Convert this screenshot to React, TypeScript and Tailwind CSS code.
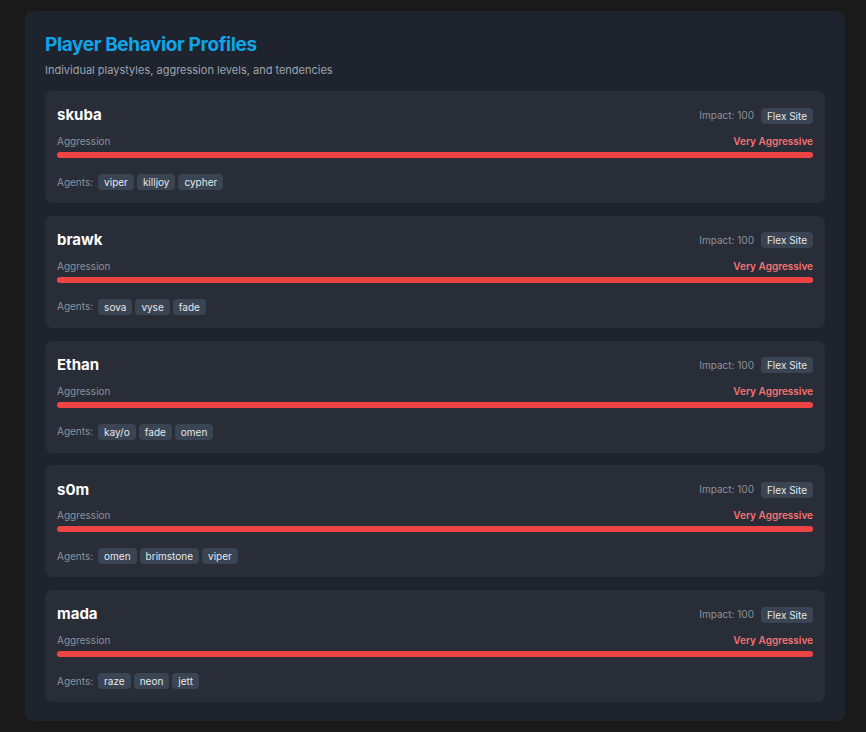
import React from "react";

const players = [
  { name: "skuba", agents: ["viper", "killjoy", "cypher"] },
  { name: "brawk", agents: ["sova", "vyse", "fade"] },
  { name: "Ethan", agents: ["kay/o", "fade", "omen"] },
  { name: "s0m", agents: ["omen", "brimstone", "viper"] },
  { name: "mada", agents: ["raze", "neon", "jett"] },
];

function Card({ name, agents }: { name: string; agents: string[] }) {
  return (
    <div className="rounded-lg bg-[#282d38] px-3 pt-3 pb-[13px]">
      <div className="flex h-6 items-center justify-between pt-px">
        <div className="text-[15px] font-bold text-white">{name}</div>
        <div className="flex items-center gap-[7px]">
          <span className="text-[10px] text-[#8b929c]">Impact: 100</span>
          <span className="rounded bg-[#3b4452] px-1.5 py-px text-[10px] leading-[14px] text-[#e5e7eb]">
            Flex Site
          </span>
        </div>
      </div>
      <div className="mt-[7px] flex items-center justify-between text-[10px] leading-[15px]">
        <span className="text-[#8b929c]">Aggression</span>
        <span className="font-semibold text-[#f87171]">Very Aggressive</span>
      </div>
      <div className="mt-[3px] h-1.5 w-full rounded-full bg-[#374151]">
        <div className="h-full w-full rounded-full bg-[#ef4444]" />
      </div>
      <div className="mt-4 flex items-center">
        <span className="mr-[5px] text-[10px] text-[#8b929c]">Agents:</span>
        <div className="flex gap-[3px]">
          {agents.map((a) => (
            <span
              key={a}
              className="rounded bg-[#3b4452] px-1.5 py-px text-[10px] leading-[14px] text-[#e5e7eb]"
            >
              {a}
            </span>
          ))}
        </div>
      </div>
    </div>
  );
}

export default function App() {
  return (
    <div
      className="min-h-[732px] bg-[#1a1a1a] pl-[25px] pt-[11px] pb-[11px]"
      style={{ fontFamily: "Inter, 'Noto Sans', sans-serif" }}
    >
      <div className="w-[820px] rounded-lg bg-[#1f232d] px-5 pt-5 pb-[19px]">
        <h1 className="text-[19px] font-bold leading-7 tracking-[-0.02em] text-[#0ea5e9]">
          Player Behavior Profiles
        </h1>
        <p className="mt-[3px] text-[11px] leading-4 text-[#9ca3af]">
          Individual playstyles, aggression levels, and tendencies
        </p>
        <div className="mt-[13px] flex flex-col gap-[12.75px]">
          {players.map((p) => (
            <Card key={p.name} name={p.name} agents={p.agents} />
          ))}
        </div>
      </div>
    </div>
  );
}
